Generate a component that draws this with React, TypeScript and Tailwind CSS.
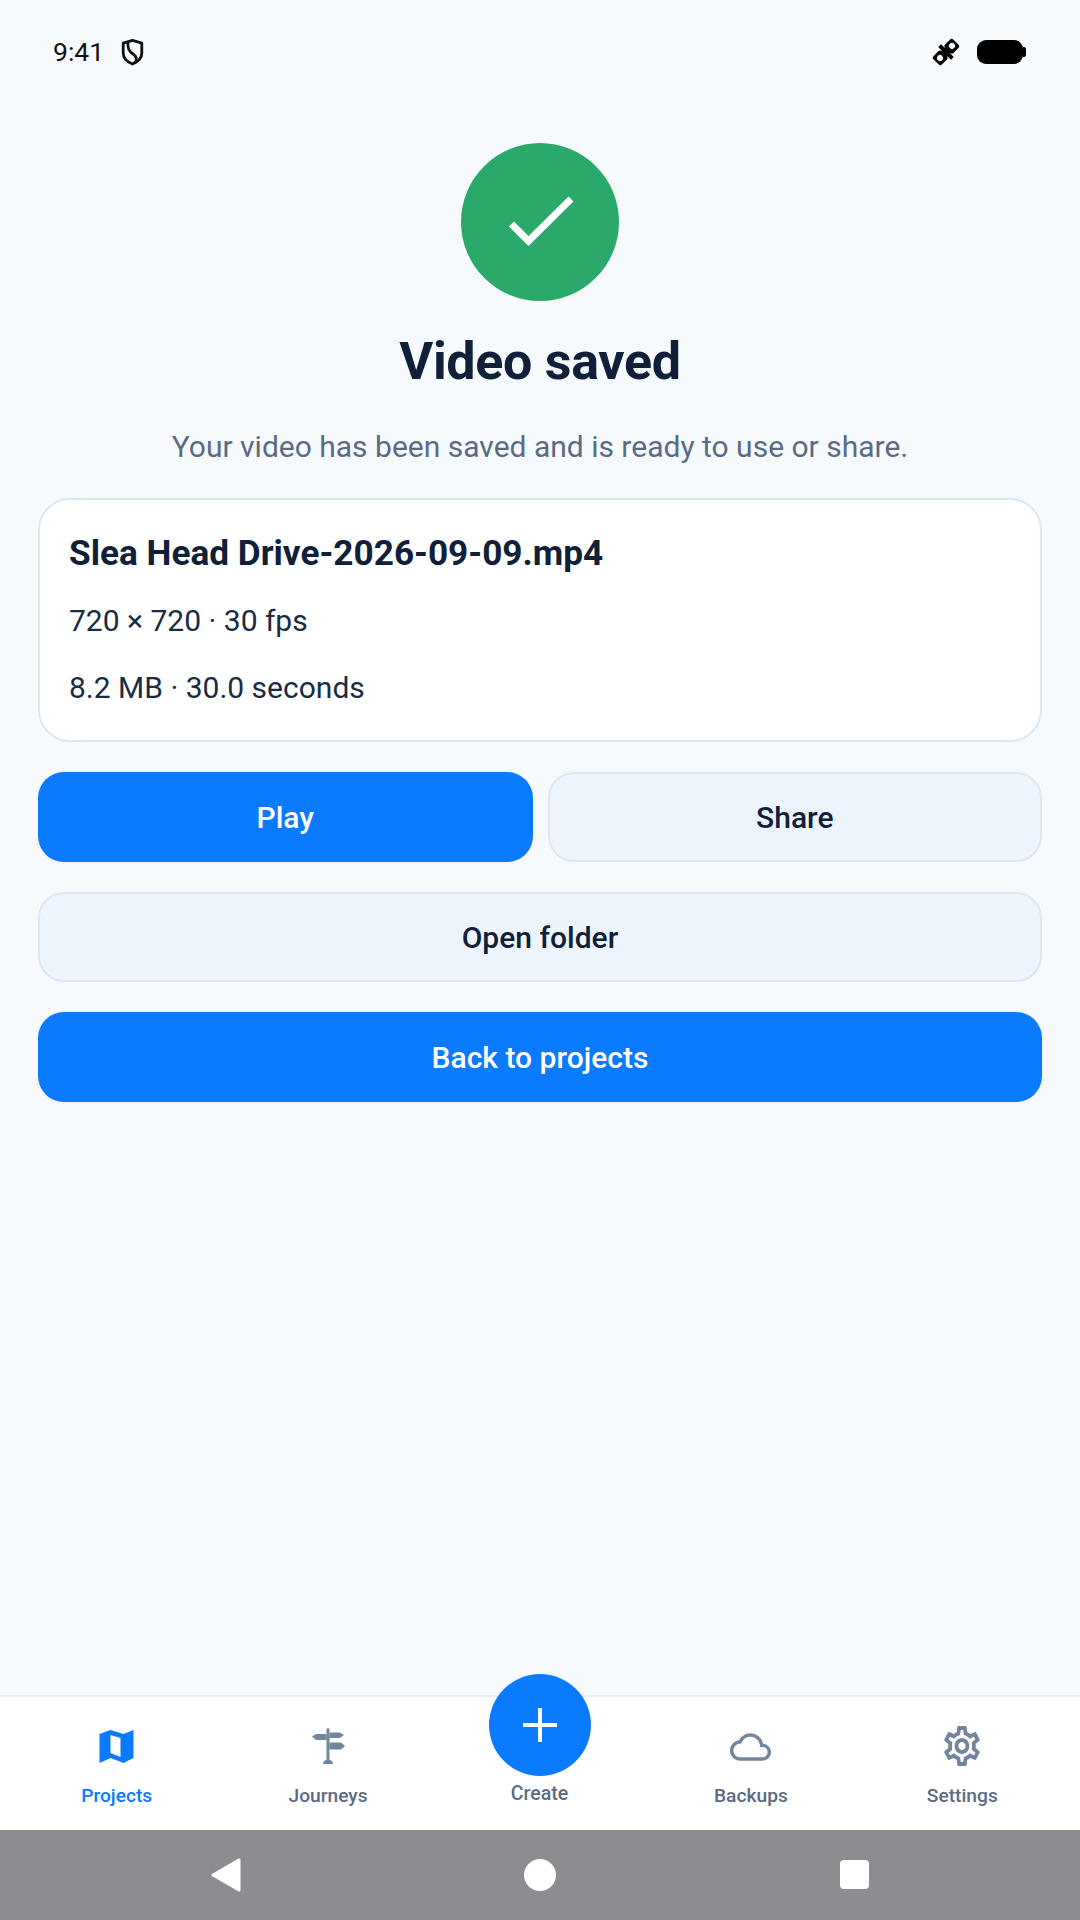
import { MdOutlineCloud, MdOutlineSettings } from 'react-icons/md';

const font = { fontFamily: 'Roboto, sans-serif' };

function ShieldIcon() {
  return (
    <svg viewBox="0 0 23 27" className="ml-[17px] h-[27px] w-[23px]" fill="none" stroke="#111" strokeWidth="2.8">
      <path d="M11.500 1.400 20.800 4.200V14c0 4.800-3.800 8.800-9.300 11-5.500-2.200-9.300-6.200-9.300-11V4.200Z" strokeLinejoin="round" />
      <path d="M7 3.500C6.300 9 8 12.500 12 15c4 2.500 4.300 5.500 1.500 9.500" />
    </svg>
  );
}

function SatelliteIcon() {
  return (
    <svg viewBox="0 0 28 28" className="h-[28px] w-[28px]">
      <g transform="rotate(-45 14 14)">
        <rect x="0" y="8" width="11.500" height="12" rx="2.500" fill="#000" />
        <rect x="16.500" y="8" width="11.500" height="12" rx="2.500" fill="#000" />
        <path d="M10 10h8v8h-8z" fill="#000" />
        <path d="M12 5h4v18h-4z" fill="#000" />
        <circle cx="5.500" cy="14" r="3" fill="#f6fafd" />
        <circle cx="22.500" cy="14" r="3" fill="#f6fafd" />
      </g>
    </svg>
  );
}

function MapIcon() {
  return (
    <svg viewBox="2.500 0 50 50" className="h-[50px] w-[50px]" fill="#0a7aff">
      <path
        fillRule="evenodd"
        d="M10 14 21 10 34 14 44 10V38L34 43 21 38 10 43ZM21 15V33L31 37V18Z"
      />
    </svg>
  );
}

function SignpostIcon() {
  return (
    <svg viewBox="0 0 50 50" className="h-[50px] w-[50px]" fill="#73859c">
      <path d="M23.500 9c0-1 3-1 3 0V40h-3Z" />
      <path d="M9 16.500 13 14H23.500V20H13Z" />
      <path d="M26.500 12.500H37L41 15 37 18H26.500Z" />
      <path d="M26.500 22.500H38L42 26 38 29.500H26.500Z" />
      <path d="M20 44c0-2 1.500-4 3.500-4h3c2 0 3.500 2 3.500 4Z" />
    </svg>
  );
}

function NavItem({ label, active, children }: { label: string; active?: boolean; children: React.ReactNode }) {
  return (
    <div className="flex flex-col items-center pt-[23px]">
      <div className="flex h-[50px] w-[50px] items-center justify-center">{children}</div>
      <span className={`mt-[14px] text-[19.2px] leading-[24px] font-medium ${active ? 'text-[#0a7aff]' : 'text-[#5b6b84]'}`}>{label}</span>
    </div>
  );
}

function Button({ label, primary, className }: { label: string; primary?: boolean; className?: string }) {
  return (
    <button
      className={`flex h-[90px] items-center justify-center rounded-[26px] text-[30px] font-medium ${
        primary ? 'bg-[#0a7aff] text-white' : 'border-2 border-[#dde6f0] bg-[#edf4fb] text-[#0f2038]'
      } ${className ?? ''}`}
    >
      {label}
    </button>
  );
}

export default function App() {
  return (
    <div className="flex h-[1920px] w-[1080px] flex-col overflow-hidden bg-[#f6fafd]" style={font}>
      {/* status bar */}
      <div className="flex h-[104px] shrink-0 items-center justify-between pr-[54px] pl-[53px]">
        <div className="flex items-center">
          <span className="text-[26.500px] leading-none text-[#111]">9:41</span>
          <ShieldIcon />
        </div>
        <div className="flex items-center gap-[17px]">
          <SatelliteIcon />
          <div className="flex items-center">
            <div className="h-[24px] w-[46px] rounded-[9px] bg-black" />
            <div className="h-[10px] w-[3px] rounded-r-[2px] bg-black" />
          </div>
        </div>
      </div>

      {/* content */}
      <div className="flex flex-1 flex-col px-[38px]">
        <div className="mt-[39px] flex h-[158px] w-[158px] items-center justify-center self-center rounded-full bg-[#2ba96b]">
          <svg viewBox="0 0 158 158" className="h-[158px] w-[158px]" fill="none" stroke="white" strokeWidth="7">
            <path d="M50.500 81 67.500 98 110 56" />
          </svg>
        </div>
        <h1 className="mt-[26px] text-center text-[52px] leading-[70px] font-bold tracking-[-0.3px] text-[#0f2038]">Video saved</h1>
        <p className="mt-[32px] text-center text-[30px] leading-[36px] text-[#5b6b84]">
          Your video has been saved and is ready to use or share.
        </p>

        <div className="mt-[33px] flex h-[244px] flex-col rounded-[32px] border-2 border-[#dde6f0] bg-white px-[29px] pt-[31px]">
          <div className="text-[35.200px] leading-[44px] font-bold text-[#0f2038]">Slea Head Drive-2026-09-09.mp4</div>
          <div className="mt-[28px] text-[30px] leading-[36px] text-[#1a2b44]">720 × 720 · 30 fps</div>
          <div className="mt-[31px] text-[30px] leading-[36px] text-[#1a2b44]">8.2 MB · 30.0 seconds</div>
        </div>

        <div className="mt-[30px] grid grid-cols-2 gap-[15px]">
          <Button label="Play" primary />
          <Button label="Share" />
        </div>
        <Button label="Open folder" className="mt-[30px]" />
        <Button label="Back to projects" primary className="mt-[30px]" />
      </div>

      {/* bottom nav */}
      <div className="grid h-[135px] shrink-0 grid-cols-5 border-t-2 border-[#e8eef4] bg-white pr-[12px] pl-[11px]">
        <NavItem label="Projects" active>
          <MapIcon />
        </NavItem>
        <NavItem label="Journeys">
          <SignpostIcon />
        </NavItem>
        <div className="flex flex-col items-center">
          <div className="-mt-[23px] ml-[1px] flex h-[102px] w-[102px] shrink-0 items-center justify-center rounded-full bg-[#0a7aff]">
            <svg viewBox="0 0 34 34" className="h-[34px] w-[34px]" stroke="white" strokeWidth="4">
              <path d="M17 0V34M0 17H34" />
            </svg>
          </div>
          <span className="mt-[6px] text-[19.500px] leading-[24px] font-medium text-[#5b6b84]">Create</span>
        </div>
        <NavItem label="Backups">
          <MdOutlineCloud className="mt-[3px] h-[42px] w-[41px] text-[#73859c]" />
        </NavItem>
        <NavItem label="Settings">
          <MdOutlineSettings preserveAspectRatio="none" className="mt-[2px] h-[48px] w-[44px] text-[#73859c]" />
        </NavItem>
      </div>

      {/* system nav */}
      <div className="flex h-[90px] shrink-0 items-center bg-[#8b8d90]">
        <div className="relative h-full w-full">
          <svg viewBox="0 0 30 34" className="absolute top-[28px] left-[211px] h-[34px] w-[30px]" fill="white" stroke="white" strokeWidth="3" strokeLinejoin="round">
            <path d="M28 2v30L2 17Z" />
          </svg>
          <div className="absolute top-[29px] left-[524px] h-[32px] w-[32px] rounded-full bg-white" />
          <div className="absolute top-[30px] left-[840px] h-[29px] w-[29px] rounded-[4px] bg-white" />
        </div>
      </div>
    </div>
  );
}
